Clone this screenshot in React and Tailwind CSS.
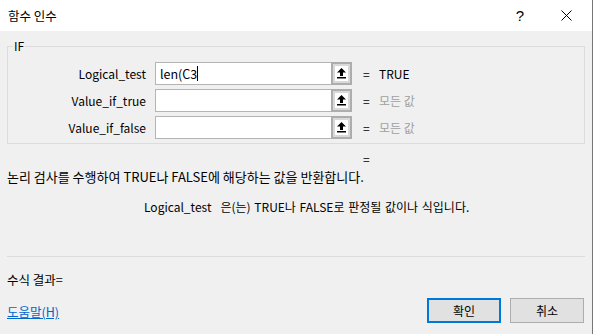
import React from 'react'

const args = [
  { name: 'Logical_test', value: 'len(C3', result: 'TRUE', focus: true },
  { name: 'Value_if_true', value: '', result: '모든 값' },
  { name: 'Value_if_false', value: '', result: '모든 값' },
]

function CollapseButton() {
  return (
    <div className="w-[21px] h-[23px] border-2 border-[#adadad] bg-[#d9d9d9] p-[2px] flex">
      <div className="flex-1 bg-white flex items-center justify-center">
        <svg width="9" height="11" viewBox="0 0 9 11">
          <polygon points="4.5,0 9,4.5 6,4.5 6,8 3,8 3,4.5 0,4.5" fill="#000" />
          <rect x="0" y="9" width="9" height="1.5" fill="#000" />
        </svg>
      </div>
    </div>
  )
}

function ArgRow({ arg }) {
  return (
    <div className="flex items-center h-[23px]">
      <div className="w-[138px] text-right">{arg.name}</div>
      <div className="ml-[9px] flex">
        <div className="w-[176px] h-[23px] bg-white border border-[#b4b4b4] border-r-0 flex items-center pl-[4px]">
          <span className="text-[12.5px]">{arg.value}</span>
          {arg.focus && <span className="w-px h-[15px] bg-black" />}
        </div>
        <CollapseButton />
      </div>
      <span className="ml-[11px] w-[16px]">=</span>
      <span className={arg.result === 'TRUE' ? 'text-black' : 'text-[#a0a0a0]'}>{arg.result}</span>
    </div>
  )
}

export default function App() {
  return (
    <div className="w-[593px] h-[334px] flex flex-col bg-[#f0f0f0] border-r border-[#767676] font-['Noto_Sans_CJK_KR',sans-serif] text-[12px] leading-[16px] text-black overflow-hidden">
      {/* title bar */}
      <div className="h-[31px] bg-white flex items-center pl-[8px]">
        <span className="text-[12.5px]">함수 인수</span>
        <span className="ml-auto text-[15px] font-['Liberation_Sans',sans-serif]">?</span>
        <svg className="ml-[37px] mr-[20px]" width="11" height="11" viewBox="0 0 11 11">
          <path d="M0.5 0.5 L10.5 10.5 M10.5 0.5 L0.5 10.5" stroke="#000" strokeWidth="1" />
        </svg>
      </div>

      <div className="flex-1 flex flex-col px-[7px] pt-[15px]">
        {/* IF group */}
        <div className="relative h-[98px] border border-[#dcdcdc] pt-[15px] flex flex-col gap-[4px]">
          <span className="absolute left-[5px] top-[-9px] px-px bg-[#f0f0f0]">IF</span>
          {args.map((a) => (
            <ArgRow key={a.name} arg={a} />
          ))}
        </div>

        <div className="mt-[7px] h-[16px] pl-[356px]">=</div>
        <div className="mt-[2px] h-[16px] text-[13px]">논리 검사를 수행하여 TRUE나 FALSE에 해당하는 값을 반환합니다.</div>
        <div className="mt-[14px] h-[16px] pl-[137px] [word-spacing:1px]">
          Logical_test<span className="ml-[9px]">은(는) TRUE나 FALSE로 판정될 값이나 식입니다.</span>
        </div>

        <div className="mt-[41px] h-px bg-[#dcdcdc]" />

        <div className="mt-[15px] h-[16px] text-[12.5px]">수식 결과=</div>

        <div className="mt-[10px] h-[25px] flex items-center">
          <a href="#" className="text-[#0066cc] underline mt-[3px] text-[12.5px]">도움말(H)</a>
          <button className="ml-auto w-[74px] h-[25px] border-2 border-[#0078d7] bg-[#e1e1e1]">확인</button>
          <button className="ml-[9px] mr-px w-[74px] h-[25px] border border-[#adadad] bg-[#e1e1e1]">취소</button>
        </div>
      </div>
    </div>
  )
}
